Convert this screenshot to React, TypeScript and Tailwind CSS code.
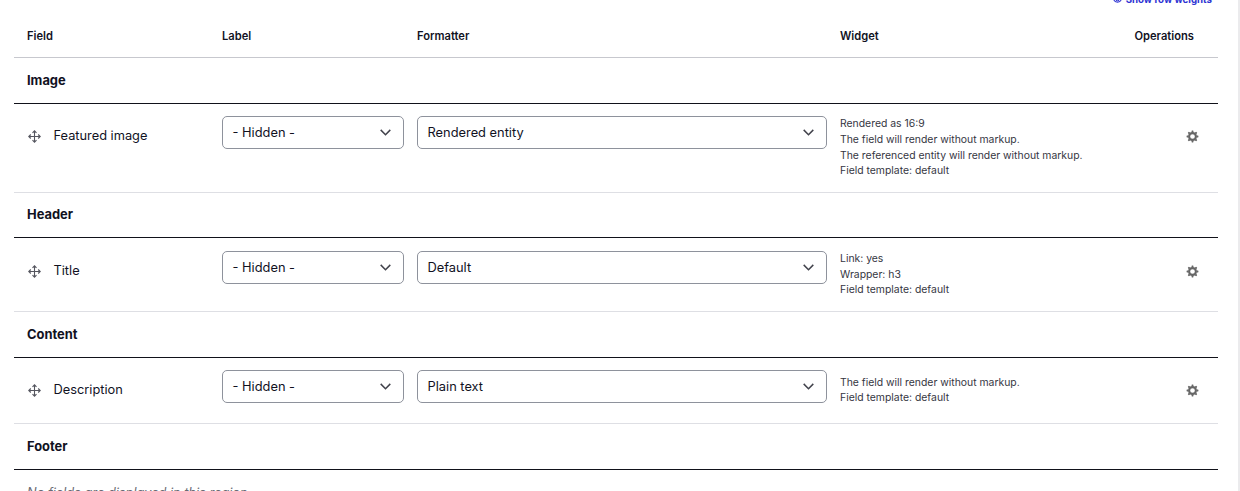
import React from "react";

const cols = "grid grid-cols-[195px_195px_423px_295px_83px] pl-[13px]";

function MoveIcon() {
  return (
    <svg className="mt-[26px] h-[13px] w-[13px] shrink-0" viewBox="0 0 13 13" fill="none" stroke="#55565f" strokeWidth="1.1">
      <path d="M6.5 1v11M1 6.5h11M4.5 2.8l2-2 2 2M4.5 10.2l2 2 2-2M2.8 4.5l-2 2 2 2M10.2 4.5l2 2-2 2" />
    </svg>
  );
}

const teeth = [0, 45, 90, 135, 180, 225, 270, 315];

function GearIcon() {
  return (
    <svg className="h-[13px] w-[13px]" viewBox="0 0 13 13" fill="#666666">
      <circle cx="6.5" cy="6.5" r="3.4" fill="none" stroke="#666666" strokeWidth="2.1" />
      {teeth.map((angle) => (
        <path key={angle} d="M5.3 2.4 5.8.6h1.4L7.7 2.4Z" transform={`rotate(${angle} 6.5 6.5)`} />
      ))}
    </svg>
  );
}

function Select({ value, className }: { value: string; className: string }) {
  return (
    <button
      type="button"
      className={`flex h-[33px] items-center justify-between rounded-[5px] border border-[#8e929c] bg-white pr-[12px] pl-[9.5px] text-[12.85px] leading-5 ${className}`}
    >
      <span>{value}</span>
      <svg className="h-[7px] w-[11px]" viewBox="0 0 11 7" fill="none" stroke="#42434c" strokeWidth="1.5">
        <path d="M.7.9 5.5 5.7 10.3.9" />
      </svg>
    </button>
  );
}

function Region({ title, height = "h-[46px]" }: { title: string; height?: string }) {
  return (
    <div className={`flex items-center border-b border-[#11121a] pt-[2px] pl-[13px] text-[12.9px] leading-none font-bold ${height}`}>
      {title}
    </div>
  );
}

type RowProps = {
  name: string;
  formatter: string;
  summary: string[];
  height: string;
  summaryPad?: string;
};

function FieldRow({ name, formatter, summary, height, summaryPad = "" }: RowProps) {
  return (
    <div className={`${cols} items-start border-b border-[#dedfe4] ${height}`}>
      <div className="flex gap-[12.5px] pl-px">
        <MoveIcon />
        <span className="mt-[22px] text-[12.8px] leading-5">{name}</span>
      </div>
      <Select value="- Hidden -" className="mt-[12px] w-[182px]" />
      <Select value={formatter} className="mt-[12px] w-[410px]" />
      <div className={`mt-[12px] text-[10.4px] leading-[15.7px] text-[#35363f] ${summaryPad}`}>
        {summary.map((line) => (
          <div key={line}>{line}</div>
        ))}
      </div>
      <div className="mt-[26px] flex justify-end pr-[19px]">
        <GearIcon />
      </div>
    </div>
  );
}

export default function App() {
  return (
    <div className="flex h-[491px] w-[1240px] overflow-hidden bg-white font-['Inter',sans-serif] text-[#11121f]">
      <main className="h-full w-[1240px] border-r-2 border-[#ebebed] pr-[20px] pl-[14px]">
        <div className="flex h-[14px] items-start justify-end pr-[6px] text-[#2e34d3]">
          <div className="-mt-[8px] flex items-center gap-[4px] text-[9.7px] leading-[15px] font-bold">
            <svg className="h-[9px] w-[9px]" viewBox="0 0 16 16" fill="none" stroke="currentColor" strokeWidth="1.8">
              <path d="M1 8s2.5-5 7-5 7 5 7 5-2.5 5-7 5-7-5-7-5Z" />
              <circle cx="8" cy="8" r="2.5" />
            </svg>
            <span>Show row weights</span>
          </div>
        </div>
        <div className={`${cols} h-[44px] items-center border-b border-[#c7c8ce] pt-[2px] text-[11.15px] leading-none font-semibold`}>
          <span>Field</span>
          <span>Label</span>
          <span>Formatter</span>
          <span>Widget</span>
          <span className="-ml-[0.5px]">Operations</span>
        </div>
        <Region title="Image" />
        <FieldRow
          name="Featured image"
          formatter="Rendered entity"
          height="h-[89px]"
          summaryPad="pt-[0.2px]"
          summary={[
            "Rendered as 16:9",
            "The field will render without markup.",
            "The referenced entity will render without markup.",
            "Field template: default",
          ]}
        />
        <Region title="Header" height="h-[45px] pb-px" />
        <FieldRow
          name="Title"
          formatter="Default"
          height="h-[74px] pt-px"
          summary={["Link: yes", "Wrapper: h3", "Field template: default"]}
        />
        <Region title="Content" />
        <FieldRow
          name="Description"
          formatter="Plain text"
          height="h-[66px]"
          summaryPad="pt-[4.7px]"
          summary={["The field will render without markup.", "Field template: default"]}
        />
        <Region title="Footer" />
        <p className="pt-[13px] pl-[13px] text-[12.8px] leading-5 text-[#6a6b74] italic">No fields are displayed in this region.</p>
      </main>
    </div>
  );
}
